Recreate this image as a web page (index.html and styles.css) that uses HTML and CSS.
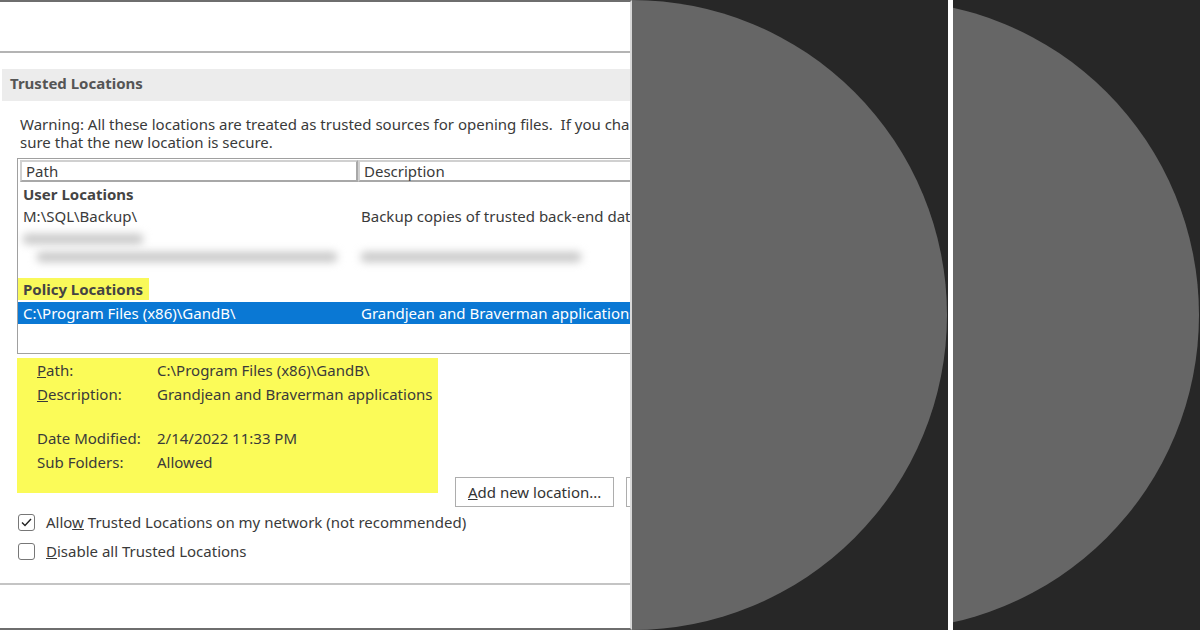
FILE: index.html
```html
<!DOCTYPE html>
<html lang="en">

<head>
    <meta charset="UTF-8">
    <title>Trusted Locations</title>
    <link rel="stylesheet" href="styles.css">
</head>

<body>
    <div class="dialog">
        <div class="top-space"></div>
        <div class="section-title">Trusted Locations</div>
        <p class="warning">Warning: All these locations are treated as trusted sources for opening files.&nbsp; If you change or add a location, make<br>sure that the new location is secure.</p>

        <div class="list">
            <div class="list-head">
                <div class="col-head col-path">Path</div>
                <div class="col-head col-desc">Description</div>
            </div>
            <div class="row group">User Locations</div>
            <div class="row">
                <span class="cell-path">M:\SQL\Backup\</span>
                <span class="cell-desc">Backup copies of trusted back-end databases</span>
            </div>
            <div class="row blurred first-blur">
                <span class="smudge" style="width: 120px"></span>
            </div>
            <div class="row blurred">
                <span class="smudge" style="width: 300px; margin-left: 14px"></span>
                <span class="smudge" style="width: 220px; margin-left: 24px"></span>
            </div>
            <div class="row spacer"></div>
            <div class="row group"><span class="marker">Policy Locations</span></div>
            <div class="row selected">
                <span class="cell-path">C:\Program Files (x86)\GandB\</span>
                <span class="cell-desc">Grandjean and Braverman applications</span>
            </div>
        </div>

        <div class="below-list">
            <div class="details">
                <div class="detail"><span class="label"><u>P</u>ath:</span><span>C:\Program Files (x86)\GandB\</span></div>
                <div class="detail"><span class="label"><u>D</u>escription:</span><span>Grandjean and Braverman applications</span></div>
                <div class="detail gap-before"><span class="label">Date Modified:</span><span>2/14/2022 11:33 PM</span></div>
                <div class="detail"><span class="label">Sub Folders:</span><span>Allowed</span></div>
            </div>
            <div class="buttons">
                <button class="btn"><u>A</u>dd new location...</button>
                <button class="btn btn-cut"></button>
            </div>
        </div>

        <div class="options">
            <label class="check">
                <span class="box">
                    <svg width="11" height="9" viewBox="0 0 11 9"><path d="M1 4.5 L4 7.5 L10 1" fill="none" stroke="#222" stroke-width="1.4"/></svg>
                </span>
                <span>Allo<u>w</u> Trusted Locations on my network (not recommended)</span>
            </label>
            <label class="check">
                <span class="box"></span>
                <span><u>D</u>isable all Trusted Locations</span>
            </label>
        </div>
        <div class="bottom-rule"></div>
    </div>

    <div class="shade shade-wide">
        <div class="disc disc-first"></div>
    </div>
    <div class="gutter"></div>
    <div class="shade shade-narrow">
        <div class="disc disc-second"></div>
    </div>
</body>

</html>
```

FILE: styles.css
```css
body {
    margin: 0;
    padding: 0;
    width: 1200px;
    height: 630px;
    overflow: hidden;
    display: flex;
    font-family: "Noto Sans", "Open Sans", sans-serif;
    font-size: 15px;
    color: #3a3a3a;
    background-color: #fff;
}

.dialog {
    width: 632px;
    height: 630px;
    flex-shrink: 0;
    box-sizing: border-box;
    border-top: 2px solid #6e6e6e;
    border-bottom: 2px solid #6e6e6e;
    border-right: 2px solid #d8d8d8;
    overflow: hidden;
    display: flex;
    flex-direction: column;
}

.top-space {
    height: 49px;
    border-bottom: 2px solid #b4b4b4;
    margin-right: -2px;
}

.section-title {
    margin: 16px 0 0 2px;
    height: 32px;
    line-height: 29px;
    padding-left: 8px;
    background-color: #ececec;
    font-weight: bold;
    color: #555;
    white-space: nowrap;
}

.warning {
    margin: 14px 0 0 20px;
    line-height: 18px;
    white-space: nowrap;
}

.list {
    margin: 7px -2px 0 17px;
    border: 1px solid #a0a0a0;
    border-right: none;
    height: 196px;
    flex-shrink: 0;
    box-sizing: border-box;
    overflow: hidden;
}

.list-head {
    display: flex;
    padding: 1px 0 0 2px;
    height: 23px;
}

.col-head {
    box-sizing: border-box;
    height: 22px;
    line-height: 19px;
    padding-left: 4px;
    border: 2px solid #a8a8a8;
    border-top-color: #d0d0d0;
    border-left-color: #d0d0d0;
    white-space: nowrap;
}

.col-path {
    width: 338px;
}

.col-desc {
    flex: 1;
}

.row {
    display: flex;
    height: 22px;
    line-height: 22px;
    padding-left: 5px;
    white-space: nowrap;
}

.group {
    font-weight: bold;
    color: #444;
}

.cell-path {
    width: 338px;
    flex-shrink: 0;
}

.blurred {
    height: 18px;
    align-items: center;
}

.first-blur {
    margin-top: 3px;
}

.smudge {
    display: inline-block;
    height: 10px;
    background-color: #c6c6c6;
    filter: blur(4px);
    border-radius: 4px;
}

.spacer {
    height: 12px;
}

.marker {
    background-color: #f9f95a;
    margin-left: -5px;
    padding: 0 6px 0 5px;
}

.selected {
    background-color: #0a78d4;
    color: #fff;
    margin-top: 2px;
}

.below-list {
    display: flex;
    align-items: flex-start;
    margin-top: 4px;
}

.details {
    margin-left: 17px;
    width: 421px;
    height: 135px;
    flex-shrink: 0;
    box-sizing: border-box;
    padding: 0 0 0 20px;
    background-color: #fbfb58;
}

.detail {
    display: flex;
    height: 24px;
    line-height: 24px;
    white-space: nowrap;
}

.gap-before {
    margin-top: 20px;
}

.label {
    width: 120px;
    flex-shrink: 0;
}

.buttons {
    display: flex;
    gap: 12px;
    margin-top: 119px;
    margin-left: 17px;
}

.btn {
    height: 30px;
    padding: 0 12px;
    background-color: #fff;
    border: 1px solid #adadad;
    font-family: inherit;
    font-size: 15px;
    color: #333;
    white-space: nowrap;
    flex-shrink: 0;
}

.btn-cut {
    width: 70px;
}

.options {
    margin: 6px 0 0 18px;
    display: flex;
    flex-direction: column;
    gap: 11px;
}

.check {
    display: flex;
    align-items: center;
    gap: 11px;
    height: 18px;
    white-space: nowrap;
}

.box {
    width: 15px;
    height: 15px;
    border: 1px solid #777;
    border-radius: 3px;
    display: flex;
    align-items: center;
    justify-content: center;
}

.bottom-rule {
    margin-top: 23px;
    margin-right: -2px;
    border-top: 2px solid #c4c4c4;
}

.shade {
    position: relative;
    height: 630px;
    overflow: hidden;
    background-color: #272727;
    flex-shrink: 0;
}

.shade-wide {
    width: 316px;
}

.shade-narrow {
    width: 247px;
}

.gutter {
    width: 5px;
    background-color: #fff;
}

.disc {
    position: absolute;
    width: 630px;
    height: 630px;
    border-radius: 50%;
    background-color: #666;
}

.disc-first {
    left: -315px;
    top: 0;
}

.disc-second {
    left: -384px;
    top: 0;
}
```
